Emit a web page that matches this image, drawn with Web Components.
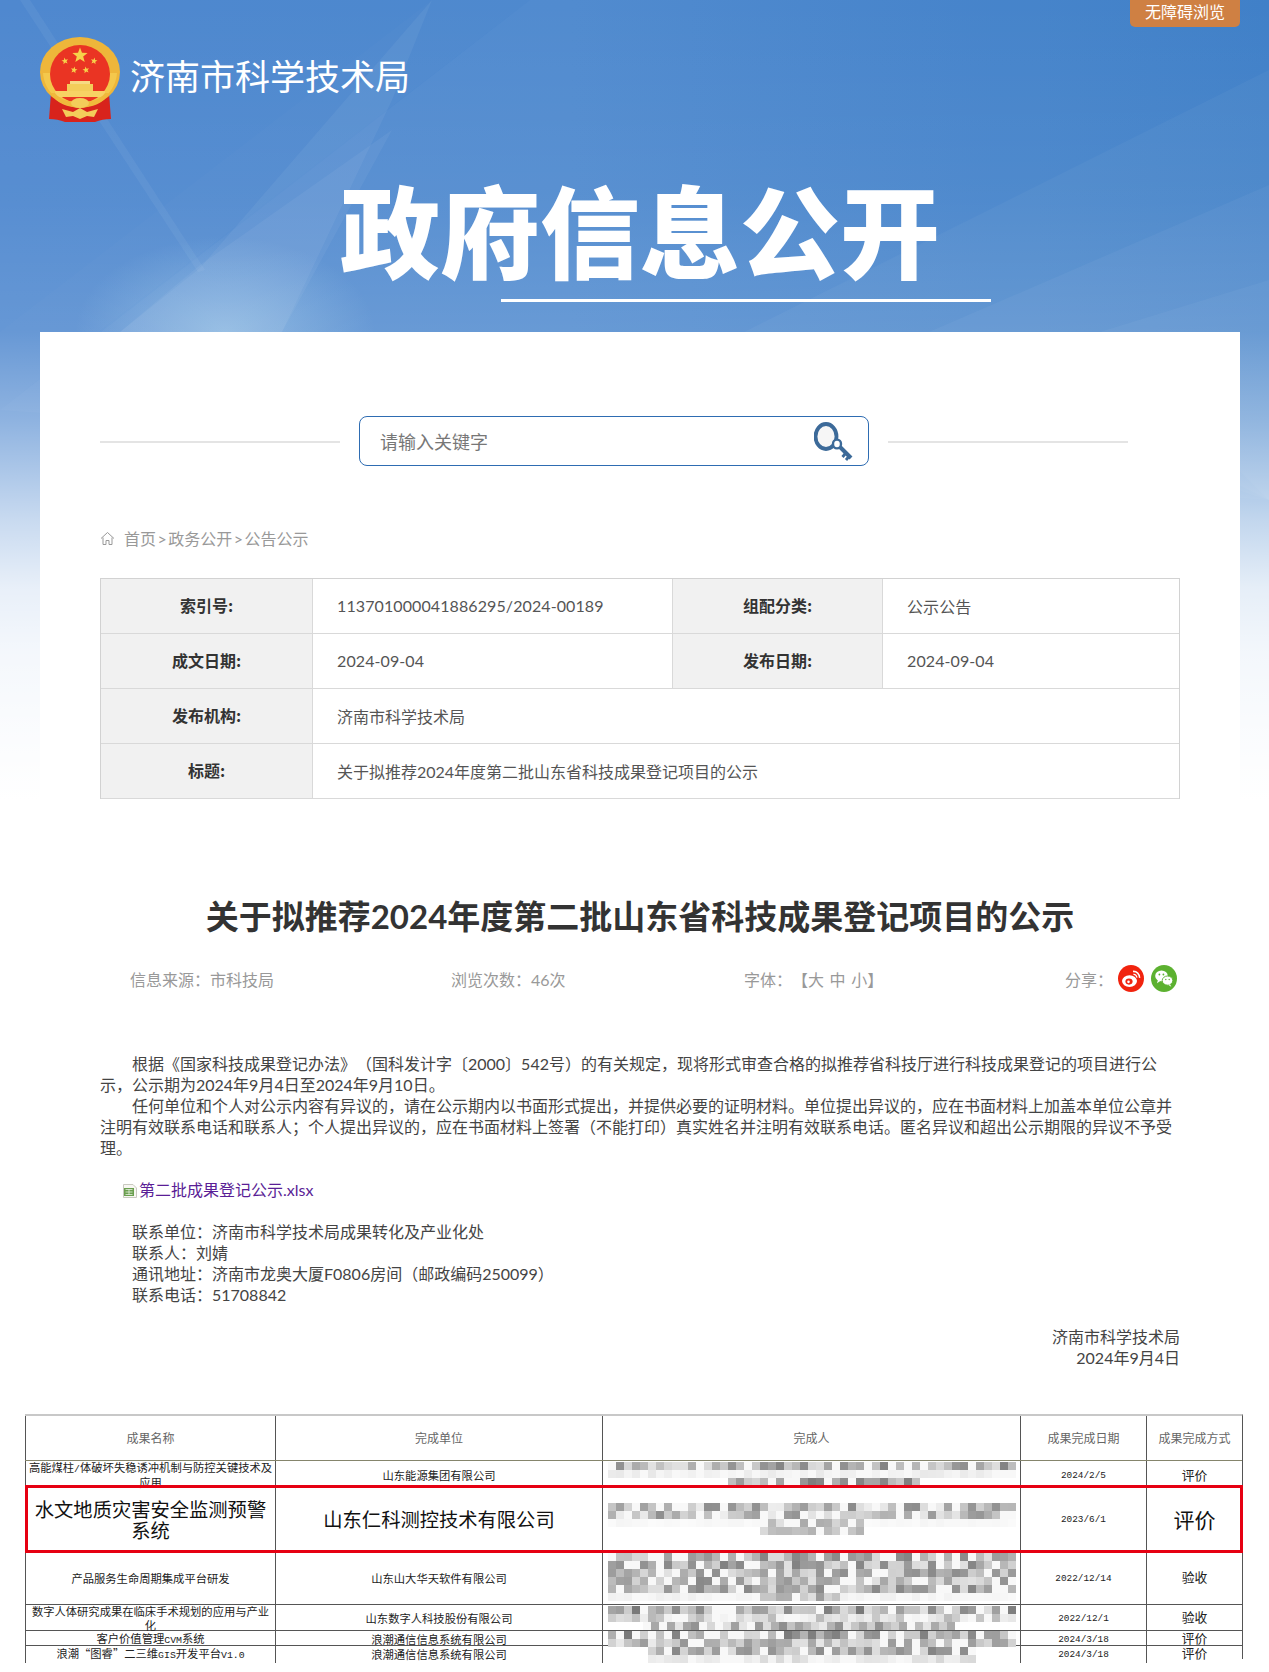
<!DOCTYPE html>
<html lang="zh-CN">
<head>
<meta charset="utf-8">
<title>关于拟推荐2024年度第二批山东省科技成果登记项目的公示</title>
<style>
    html, body { margin: 0; background: #fff; }
</style>
</head>
<body>
<gov-page>
    <gov-header slot="header" site="济南市科学技术局" banner="政府信息公开" access="无障碍浏览"></gov-header>
    <gov-search placeholder="请输入关键字"></gov-search>
    <gov-crumb>
        <span>首页</span><i>&gt;</i><span>政务公开</span><i>&gt;</i><span>公告公示</span>
    </gov-crumb>
    <meta-table></meta-table>
    <article-head source="市科技局" views="46次">关于拟推荐2024年度第二批山东省科技成果登记项目的公示</article-head>
    <article-body>
        <p class="in">根据《国家科技成果登记办法》（国科发计字〔2000〕542号）的有关规定，现将形式审查合格的拟推荐省科技厅进行科技成果登记的项目进行公示，公示期为2024年9月4日至2024年9月10日。</p>
        <p class="in">任何单位和个人对公示内容有异议的，请在公示期内以书面形式提出，并提供必要的证明材料。单位提出异议的，应在书面材料上加盖本单位公章并注明有效联系电话和联系人；个人提出异议的，应在书面材料上签署（不能打印）真实姓名并注明有效联系电话。匿名异议和超出公示期限的异议不予受理。</p>
        <p>&nbsp;</p>
        <file-link name="第二批成果登记公示.xlsx"></file-link>
        <p>&nbsp;</p>
        <p class="in">联系单位：济南市科学技术局成果转化及产业化处</p>
        <p class="in">联系人：刘婧</p>
        <p class="in">通讯地址：济南市龙奥大厦F0806房间（邮政编码250099）</p>
        <p class="in">联系电话：51708842</p>
        <p>&nbsp;</p>
        <p class="sign">济南市科学技术局</p>
        <p class="sign">2024年9月4日</p>
    </article-body>
    <result-table></result-table>
</gov-page>

<script>
const FONT = 'Lato, "Noto Sans CJK SC", sans-serif';

function makeTemplate(html) {
    const template = document.createElement("template");
    template.innerHTML = html;
    return template;
}

// ---------- page shell with the blue backdrop ----------
const pageTemplate = makeTemplate(`
    <style>
    :host { display: block; position: relative; width: 1200px; height: 1672px; padding: 0 29px 0 40px; overflow: hidden; font-family: ${FONT}; font-size: 16px; color: #444; text-spacing-trim: space-all; }
    .backdrop { position: absolute; left: 0; top: 0; width: 1269px; height: 800px; z-index: 0; }
    .header, .card { position: relative; z-index: 1; }
    .card { background: #fff; height: 1340px; padding: 84px 60px 0; box-sizing: border-box; }
    </style>
    <svg class="backdrop" viewBox="0 0 1269 800" preserveAspectRatio="none">
        <defs>
            <linearGradient id="base" x1="0" y1="0" x2="1" y2="0">
                <stop offset="0" stop-color="#4f88cf"/>
                <stop offset="0.45" stop-color="#4c88ce"/>
                <stop offset="1" stop-color="#3a7cc7"/>
            </linearGradient>
            <linearGradient id="fade" x1="0" y1="0" x2="0" y2="1">
                <stop offset="0" stop-color="#fff" stop-opacity="0"/>
                <stop offset="0.25" stop-color="#fff" stop-opacity="0.05"/>
                <stop offset="0.415" stop-color="#fff" stop-opacity="0.13"/>
                <stop offset="0.525" stop-color="#fff" stop-opacity="0.36"/>
                <stop offset="0.65" stop-color="#fff" stop-opacity="0.69"/>
                <stop offset="0.734" stop-color="#fff" stop-opacity="0.87"/>
                <stop offset="0.816" stop-color="#fff" stop-opacity="0.94"/>
                <stop offset="0.9" stop-color="#fff" stop-opacity="0.97"/>
                <stop offset="1" stop-color="#fff" stop-opacity="1"/>
            </linearGradient>
            <radialGradient id="glow" cx="0.5" cy="0.5" r="0.5">
                <stop offset="0" stop-color="#bfe3f2" stop-opacity="0.42"/>
                <stop offset="1" stop-color="#bfe3f2" stop-opacity="0"/>
            </radialGradient>
        </defs>
        <rect width="1269" height="800" fill="url(#base)"/>
        <polygon points="530,0 1269,0 1269,500 0,410" fill="#fff" opacity="0.03"/>
        <polygon points="432,0 530,0 98,332 0,410 0,332" fill="#fff" opacity="0.015"/>
        <polygon points="20,0 30,0 205,270 198,272" fill="#fff" opacity="0.05"/>
        <polygon points="432,0 392,100 282,332 120,332 200,268" fill="#fff" opacity="0.05"/>
        <polygon points="200,265 392,130 282,332 120,332" fill="#fff" opacity="0.05"/>
        <ellipse cx="225" cy="332" rx="150" ry="95" fill="url(#glow)"/>
        <polygon points="1269,70 1269,500 744,332" fill="#fff" opacity="0.035"/>
        <polygon points="1269,185 1269,500 929,332" fill="#fff" opacity="0.04"/>
        <polygon points="1269,280 1269,500 1100,332" fill="#fff" opacity="0.04"/>
        <rect width="1269" height="800" fill="url(#fade)"/>
    </svg>
    <div class="header"><slot name="header"></slot></div>
    <div class="card"><slot></slot></div>
`);

class GovPage extends HTMLElement {
    constructor() {
        super();
        this.attachShadow({ mode: "open" });
        this.shadowRoot.appendChild(pageTemplate.content.cloneNode(true));
    }
}
customElements.define("gov-page", GovPage);

// ---------- national emblem ----------
function star(cx, cy, r, rot) {
    const pts = [];
    for (let i = 0; i < 10; i++) {
        const a = (i * Math.PI) / 5 - Math.PI / 2 + (rot || 0);
        const d = i % 2 ? r * 0.42 : r;
        pts.push((cx + d * Math.cos(a)).toFixed(1) + "," + (cy + d * Math.sin(a)).toFixed(1));
    }
    return `<polygon points="${pts.join(" ")}" fill="#f6d24a"/>`;
}

const emblemTemplate = makeTemplate(`
    <style>
    :host { display: block; width: 80px; height: 85px; }
    svg { display: block; }
    </style>
    <svg width="80" height="85" viewBox="0 0 80 85">
        <path d="M11 56 L9 82 C15 82 20 83 25 85 L55 85 C60 83 65 82 71 82 L69 56 Z" fill="#d8231c"/>
        <ellipse cx="40" cy="35" rx="40" ry="35" fill="#eeb63a"/>
        <path d="M3 36 C4 54 20 69 40 71 C60 69 76 54 77 36 L70 36 C69 50 56 62 40 64 C24 62 11 50 10 36 Z" fill="#f4c84c"/>
        <ellipse cx="40" cy="37" rx="30" ry="29" fill="#ea3423"/>
        ${star(40, 18.5, 8)}
        ${star(25, 24, 3.5, -0.2)}
        ${star(54, 24, 3.5, 0.2)}
        ${star(34, 33, 3.5, 0.2)}
        ${star(46, 33, 3.5, -0.2)}
        <rect x="30" y="44" width="20" height="3" fill="#f7da84"/>
        <rect x="27" y="47" width="26" height="7" fill="#f3cd5a"/>
        <rect x="15" y="54" width="50" height="6" fill="#f7d264"/>
        <path d="M11 56 C16 67 28 70 40 71 C52 70 64 67 69 56 L65 56 C60 63 50 65 40 65 C30 65 20 63 15 56 Z" fill="#f0b93c"/>
        <ellipse cx="40" cy="66" rx="9" ry="5" fill="#f3cd5a"/>
        <path d="M22 72 L33 75 L40 71 L47 75 L58 72 L54 80 L47 79 L40 82 L33 79 L26 80 Z" fill="#f3cd5a"/>
    </svg>
`);

class GovEmblem extends HTMLElement {
    constructor() {
        super();
        this.attachShadow({ mode: "open" });
        this.shadowRoot.appendChild(emblemTemplate.content.cloneNode(true));
    }
}
customElements.define("gov-emblem", GovEmblem);

// ---------- header ----------
const headerTemplate = makeTemplate(`
    <style>
    :host { display: block; height: 332px; color: #fff; }
    .top { display: flex; justify-content: space-between; align-items: flex-start; height: 122px; }
    .brand { display: flex; align-items: flex-start; gap: 10px; margin-top: 37px; }
    .site { font-family: "Noto Sans CJK SC", sans-serif; font-size: 35px; font-weight: 400; line-height: 76px; }
    .access { width: 110px; height: 27px; line-height: 23px; text-align: center; font-size: 16px; font-family: "Noto Sans CJK SC", sans-serif; background: #cf8043; border-radius: 0 0 5px 5px; }
    .banner { margin-top: 56px; height: 100px; line-height: 100px; text-align: center; font-family: "Noto Sans CJK SC", sans-serif; font-size: 100px; font-weight: 900; }
    .rule { width: 490px; height: 3px; margin: 21px 0 0 461px; background: #fff; }
    </style>
    <div class="top">
        <div class="brand"><gov-emblem></gov-emblem><span class="site"></span></div>
        <div class="access"></div>
    </div>
    <div class="banner"></div>
    <div class="rule"></div>
`);

class GovHeader extends HTMLElement {
    constructor() {
        super();
        this.attachShadow({ mode: "open" });
        this.shadowRoot.appendChild(headerTemplate.content.cloneNode(true));
        this.shadowRoot.querySelector(".site").textContent = this.getAttribute("site");
        this.shadowRoot.querySelector(".banner").textContent = this.getAttribute("banner");
        this.shadowRoot.querySelector(".access").textContent = this.getAttribute("access");
    }
}
customElements.define("gov-header", GovHeader);

// ---------- search ----------
const searchTemplate = makeTemplate(`
    <style>
    :host { display: flex; align-items: center; height: 50px; }
    .line { width: 240px; height: 2px; margin-top: 1px; background: #e4e4e4; }
    .box { display: flex; align-items: center; justify-content: space-between; box-sizing: border-box; width: 510px; height: 50px; margin: 0 19px 0 19px; padding: 0 14px 0 20px; border: 1px solid #2e6cb2; border-radius: 8px; }
    .hint { font-size: 18px; color: #777; font-family: "Noto Sans CJK SC", sans-serif; margin-top: -1px; }
    svg { display: block; }
    </style>
    <div class="line"></div>
    <div class="box">
        <span class="hint"></span>
        <svg width="40" height="42" viewBox="0 0 40 42">
            <ellipse cx="12" cy="16.5" rx="10.5" ry="12.5" fill="#f6f6f6" stroke="#3c6a99" stroke-width="3.8"/>
            <ellipse cx="23" cy="24" rx="4" ry="4.4" fill="#fff" stroke="#3c6a99" stroke-width="2.4"/>
            <path d="M26 27 L37 38" stroke="#3c6a99" stroke-width="4"/>
            <path d="M31 34 L28.5 37 M34.5 37 L32 40" stroke="#3c6a99" stroke-width="2.8"/>
        </svg>
    </div>
    <div class="line"></div>
`);

class GovSearch extends HTMLElement {
    constructor() {
        super();
        this.attachShadow({ mode: "open" });
        this.shadowRoot.appendChild(searchTemplate.content.cloneNode(true));
        this.shadowRoot.querySelector(".hint").textContent = this.getAttribute("placeholder");
    }
}
customElements.define("gov-search", GovSearch);

// ---------- breadcrumb ----------
const crumbTemplate = makeTemplate(`
    <style>
    :host { display: flex; align-items: center; gap: 9px; height: 24px; margin-top: 60px; color: #999; font-size: 16px; }
    svg { display: block; flex: none; }
    </style>
    <svg width="15" height="15" viewBox="0 0 15 15" fill="none" stroke="#999" stroke-width="1">
        <path d="M1 7.5 L7.5 1.5 L14 7.5"/>
        <path d="M3 6.5 V13.5 H6 V9.5 H9 V13.5 H12 V6.5"/>
    </svg>
    <div><slot></slot></div>
`);

class GovCrumb extends HTMLElement {
    constructor() {
        super();
        this.attachShadow({ mode: "open" });
        this.shadowRoot.appendChild(crumbTemplate.content.cloneNode(true));
        this.querySelectorAll("i").forEach(sep => {
            sep.style.fontStyle = "normal";
            sep.style.padding = "0 1.5px";
        });
    }
}
customElements.define("gov-crumb", GovCrumb);

// ---------- meta table ----------
const metaTemplate = makeTemplate(`
    <style>
    :host { display: grid; grid-template-columns: 212px 360px 210px 1fr; grid-auto-rows: 55px; margin-top: 28px; border: 1px solid #d2d2d2; border-width: 1px 1px 0 1px; box-sizing: border-box; height: 221px; }
    div { display: flex; align-items: center; border-bottom: 1px solid #d9d9d9; box-sizing: border-box; }
    .k { justify-content: center; background: #f1f1f1; font-weight: 700; color: #333; font-family: "Noto Sans CJK SC", sans-serif; border-right: 1px solid #d9d9d9; padding-bottom: 2px; }
    .v { padding-left: 24px; padding-bottom: 1px; color: #555; border-right: 1px solid #d9d9d9; letter-spacing: 0.1px; }
    .wide { grid-column: span 3; border-right: 0; letter-spacing: 0; }
    .end { border-right: 0; }
    </style>
`);

const META_ROWS = [
    [["索引号:", "113701000041886295/2024-00189"], ["组配分类:", "公示公告"]],
    [["成文日期:", "2024-09-04"], ["发布日期:", "2024-09-04"]],
    [["发布机构:", "济南市科学技术局"]],
    [["标题:", "关于拟推荐2024年度第二批山东省科技成果登记项目的公示"]]
];

class MetaTable extends HTMLElement {
    constructor() {
        super();
        this.attachShadow({ mode: "open" });
        this.shadowRoot.appendChild(metaTemplate.content.cloneNode(true));
        META_ROWS.forEach(row => {
            row.forEach((pair, i) => {
                const key = document.createElement("div");
                key.className = "k";
                key.textContent = pair[0];
                const value = document.createElement("div");
                value.className = "v";
                if (row.length === 1) value.classList.add("wide");
                if (i === 1) value.classList.add("end");
                value.textContent = pair[1];
                this.shadowRoot.append(key, value);
            });
        });
    }
}
customElements.define("meta-table", MetaTable);

// ---------- article heading ----------
const headTemplate = makeTemplate(`
    <style>
    :host { display: block; margin-top: 92px; }
    h1 { margin: 0; height: 50px; line-height: 50px; text-align: center; font-size: 33px; font-weight: 700; color: #333; }
    .info { display: grid; grid-template-columns: 321px 293px 321px auto; align-items: center; height: 27px; margin-top: 24px; padding-left: 30px; color: #999; font-family: "Noto Sans CJK SC", sans-serif; }
    .num { font-family: ${FONT}; }
    .font { white-space: pre; word-spacing: 2px; }
    .share { display: flex; align-items: center; }
    .share svg { display: block; margin-left: 5px; }
    .share svg + svg { margin-left: 7px; }
    </style>
    <h1><slot></slot></h1>
    <div class="info">
        <span class="source"></span>
        <span class="views"></span>
        <span class="font">字体：【大 中 小】</span>
        <span class="share">分享：
            <svg width="26" height="27" viewBox="0 0 26 26" preserveAspectRatio="none">
                <circle cx="13" cy="13" r="13" fill="#f1230e"/>
                <ellipse cx="11.5" cy="15.5" rx="7.5" ry="5.6" fill="#fff"/>
                <ellipse cx="11" cy="16" rx="3.6" ry="2.9" fill="#f1230e"/>
                <circle cx="10.5" cy="16.2" r="1.3" fill="#fff"/>
                <path d="M15 6.2 A6 6 0 0 1 21.6 12.4" fill="none" stroke="#fff" stroke-width="1.5"/>
                <path d="M15.4 9 A3 3 0 0 1 18.8 12.2" fill="none" stroke="#fff" stroke-width="1.3"/>
            </svg>
            <svg width="26" height="27" viewBox="0 0 26 26" preserveAspectRatio="none">
                <circle cx="13" cy="13" r="13" fill="#5cb130"/>
                <ellipse cx="10.5" cy="10.5" rx="6.3" ry="5.2" fill="#fff"/>
                <path d="M7 14 L6 17.5 L10 15 Z" fill="#fff"/>
                <ellipse cx="16.5" cy="15" rx="5.3" ry="4.4" fill="#fff" stroke="#5cb130" stroke-width="0.9"/>
                <path d="M19 18.5 L20.3 21 L17 19 Z" fill="#fff"/>
                <circle cx="8.4" cy="9.2" r="0.9" fill="#5cb130"/>
                <circle cx="12.4" cy="9.2" r="0.9" fill="#5cb130"/>
                <circle cx="14.8" cy="14" r="0.7" fill="#5cb130"/>
                <circle cx="18.2" cy="14" r="0.7" fill="#5cb130"/>
            </svg>
        </span>
    </div>
`);

class ArticleHead extends HTMLElement {
    constructor() {
        super();
        this.attachShadow({ mode: "open" });
        this.shadowRoot.appendChild(headTemplate.content.cloneNode(true));
        this.shadowRoot.querySelector(".source").textContent = "信息来源：" + this.getAttribute("source");
        this.shadowRoot.querySelector(".views").innerHTML = `浏览次数：<span class="num">${this.getAttribute("views")}</span>`;
    }
}
customElements.define("article-head", ArticleHead);

// ---------- article text ----------
const bodyTemplate = makeTemplate(`
    <style>
    :host { display: block; margin-top: 61px; line-height: 21px; color: #444; }
    ::slotted(p) { margin: 0; }
    ::slotted(p.in) { text-indent: 32px; }
    ::slotted(p.sign) { text-align: right; }
    </style>
    <slot></slot>
`);

class ArticleBody extends HTMLElement {
    constructor() {
        super();
        this.attachShadow({ mode: "open" });
        this.shadowRoot.appendChild(bodyTemplate.content.cloneNode(true));
    }
}
customElements.define("article-body", ArticleBody);

const fileTemplate = makeTemplate(`
    <style>
    :host { display: flex; align-items: center; height: 21px; padding-left: 22px; gap: 1px; color: #5a1e96; }
    svg { display: block; flex: none; margin-top: 3px; }
    </style>
    <svg width="16" height="16" viewBox="0 0 16 16">
        <path d="M1.5 1.5 H11 L14.5 5 V14.5 H1.5 Z" fill="#f7f7f2" stroke="#c9c9c0"/>
        <rect x="2" y="5" width="10" height="8" fill="#6a9f4f"/>
        <path d="M3.5 6.5 H10.5 M3.5 9 H10.5 M3.5 11.5 H10.5 M7 6 V12" stroke="#e7f0df" stroke-width="0.8"/>
    </svg>
    <span></span>
`);

class FileLink extends HTMLElement {
    constructor() {
        super();
        this.attachShadow({ mode: "open" });
        this.shadowRoot.appendChild(fileTemplate.content.cloneNode(true));
        this.shadowRoot.querySelector("span").textContent = this.getAttribute("name");
    }
}
customElements.define("file-link", FileLink);

// ---------- pixelated names, cells of 8px ----------
let seed = 73;
function rnd() {
    seed = (seed * 16807) % 2147483647;
    return seed / 2147483647;
}

class NameBlur extends HTMLElement {
    constructor() {
        super();
        this.attachShadow({ mode: "open" });
    }

    connectedCallback() {
        const bands = JSON.parse(this.getAttribute("bands"));
        let cells = "";
        bands.forEach(b => {
            for (let r = 0; r < b.rows; r++) {
                for (let x = b.x0; x < b.x1; x += 8) {
                    let g = rnd() < 0.2 ? 248 : b.lo + rnd() * (b.hi - b.lo);
                    g = Math.round(g);
                    cells += `<rect x="${x}" y="${b.y + r * 8}" width="8" height="8" fill="rgb(${g},${g},${g})"/>`;
                }
            }
        });
        this.shadowRoot.innerHTML = `
            <style>
            :host { display: block; }
            svg { display: block; overflow: visible; }
            </style>
            <svg width="417" height="${this.getAttribute("height")}">${cells}</svg>`;
    }
}
customElements.define("name-blur", NameBlur);

// ---------- results picture, drawn as a table ----------
const resultTemplate = makeTemplate(`
    <style>
    :host { display: block; position: relative; width: 1218px; margin: 46px 0 0 -75px; border-top: 2px solid #c8c8c8; border-right: 1px solid #555; box-sizing: border-box; font-family: "Noto Sans CJK SC", sans-serif; color: #222; }
    .row { display: grid; grid-template-columns: 250px 327px 418px 126px 1fr; border-top: 1px solid #555; }
    .row.head { border-top: 0; color: #666; }
    .row.after-head { border-top: 1px solid #85856c; }
    .c { text-align: center; border-left: 1px solid #555; font-size: 11.3px; line-height: 13.5px; min-width: 0; padding: 0 2px; box-sizing: border-box; display: flex; flex-direction: column; justify-content: center; }
    .head .c { font-size: 12px; }
    .blur { padding: 0; display: block; }
    .date { font-family: "Liberation Mono", monospace; font-size: 9.4px; color: #222; }
    .how { font-size: 12.8px; padding-bottom: 3px; }
    .tight { line-height: 13px; padding-bottom: 2px; }
    .big { font-size: 19.3px; line-height: 21px; color: #111; }
    .bigger { font-size: 21px; color: #111; }
    b { font: inherit; font-family: "Liberation Mono", monospace; font-size: 0.87em; }
    .mark { position: absolute; left: 0; top: 69px; width: 1218px; height: 68px; border: 3px solid #e60012; box-sizing: border-box; }
    </style>
`);

const RESULT_ROWS = [
    { h: 44, cls: "head", name: "成果名称", unit: "完成单位", who: "完成人", date: "成果完成日期", how: "成果完成方式" },
    { h: 25, cls: "after-head", tight: true, name: "高能煤柱/体破坏失稳诱冲机制与防控关键技术及应用", unit: "山东能源集团有限公司", date: "2024/2/5", how: "评价",
      bands: [{ y: 1, rows: 1, x0: 5, x1: 413, lo: 130, hi: 225 }, { y: 9, rows: 1, x0: 5, x1: 413, lo: 232, hi: 250 }, { y: 17, rows: 1, x0: 125, x1: 310, lo: 120, hi: 220 }] },
    { h: 65, name: "水文地质灾害安全监测预警系统", unit: "山东仁科测控技术有限公司", date: "2023/6/1", how: "评价", big: true,
      bands: [{ y: 16, rows: 2, x0: 5, x1: 413, lo: 140, hi: 240 }, { y: 32, rows: 1, x0: 5, x1: 413, lo: 245, hi: 252 }, { y: 32, rows: 2, x0: 157, x1: 261, lo: 170, hi: 235 }] },
    { h: 51, name: "产品服务生命周期集成平台研发", unit: "山东山大华天软件有限公司", date: "2022/12/14", how: "验收",
      bands: [{ y: 0, rows: 5, x0: 5, x1: 413, lo: 130, hi: 225 }, { y: 40, rows: 1, x0: 5, x1: 413, lo: 240, hi: 250 }, { y: 40, rows: 1, x0: 157, x1: 237, lo: 150, hi: 225 }] },
    { h: 25, name: "数字人体研究成果在临床手术规划的应用与产业化", unit: "山东数字人科技股份有限公司", date: "2022/12/1", how: "验收",
      bands: [{ y: 1, rows: 1, x0: 5, x1: 413, lo: 120, hi: 230 }, { y: 9, rows: 1, x0: 5, x1: 413, lo: 185, hi: 248 }, { y: 17, rows: 1, x0: 40, x1: 350, lo: 140, hi: 235 }] },
    { h: 14, name: "客户价值管理CVM系统", unit: "浪潮通信信息系统有限公司", date: "2024/3/18", how: "评价",
      bands: [{ y: 0, rows: 1, x0: 5, x1: 413, lo: 120, hi: 225 }, { y: 8, rows: 1, x0: 5, x1: 413, lo: 150, hi: 235 }] },
    { h: 13, name: "浪潮“图睿”二三维GIS开发平台V1.0", unit: "浪潮通信信息系统有限公司", date: "2024/3/18", how: "评价",
      bands: [{ y: 1, rows: 1, x0: 45, x1: 373, lo: 130, hi: 225 }, { y: 9, rows: 1, x0: 45, x1: 373, lo: 215, hi: 245 }] }
];

class ResultTable extends HTMLElement {
    constructor() {
        super();
        this.attachShadow({ mode: "open" });
        this.shadowRoot.appendChild(resultTemplate.content.cloneNode(true));

        RESULT_ROWS.forEach(item => {
            const row = document.createElement("div");
            row.className = "row " + (item.cls || "");
            row.style.height = item.h + "px";

            const cell = (text, cls) => {
                const c = document.createElement("div");
                c.className = "c " + (cls || "");
                const inner = document.createElement("span");
                // latin runs of the scanned table are in a narrow typewriter face
                inner.innerHTML = text.replace(/[A-Za-z0-9.\/]+/g, "<b>$&</b>");
                if (cls && cls.includes("date")) inner.textContent = text;
                c.appendChild(inner);
                row.appendChild(c);
                return c;
            };
            cell(item.name, item.big ? "big" : item.tight ? "tight" : "");
            cell(item.unit, item.big ? "big" : "");
            if (item.bands) {
                const holder = document.createElement("div");
                holder.className = "c blur";
                const blur = document.createElement("name-blur");
                blur.setAttribute("height", item.h);
                blur.setAttribute("bands", JSON.stringify(item.bands));
                holder.appendChild(blur);
                row.appendChild(holder);
            } else {
                cell(item.who);
            }
            cell(item.date, item.bands ? "date" : "");
            cell(item.how, item.big ? "bigger" : item.bands ? "how" : "");
            this.shadowRoot.appendChild(row);
        });

        const mark = document.createElement("div");
        mark.className = "mark";
        this.shadowRoot.appendChild(mark);
    }
}
customElements.define("result-table", ResultTable);
</script>
</body>
</html>
